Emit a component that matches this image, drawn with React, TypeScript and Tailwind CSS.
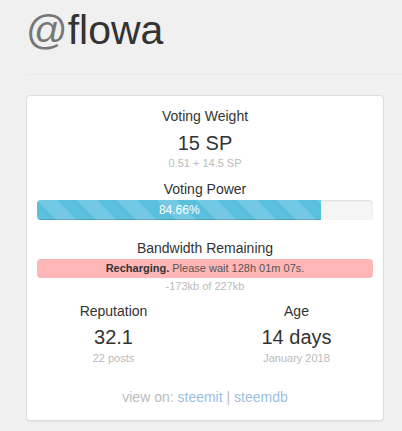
import React from 'react'

const stripes =
  'bg-[linear-gradient(45deg,rgba(255,255,255,.15)_25%,transparent_25%,transparent_50%,rgba(255,255,255,.15)_50%,rgba(255,255,255,.15)_75%,transparent_75%,transparent)] bg-[length:40px_40px]'

export default function App() {
  const power = 84.66
  return (
    <div className="min-h-[431px] bg-[#f0f0f0] pl-[26px] pt-[8px] font-['Liberation_Sans',Arial,sans-serif] text-[#333]">
      <h1 className="text-[41px] leading-[45px]">
        <span className="text-[#777]">@</span>flowa
      </h1>
      <hr className="mt-[21px] border-t border-[#e9e9e9]" />
      <div className="mt-[20px] w-[358px] rounded-[4px] border border-[#ddd] bg-white px-[10px] pt-[10px] pb-[13px] text-center shadow-[0_1px_1px_rgba(0,0,0,.05)]">
        <div className="text-[14px] leading-[20px]">Voting Weight</div>
        <div className="mt-[5px] text-[20px] leading-[24px]">15 SP</div>
        <div className="text-[11px] leading-[16px] text-[#bbb]">0.51 + 14.5 SP</div>

        <div className="mt-[8px] text-[14px] leading-[20px]">Voting Power</div>
        <div className="mt-[1px] h-[20px] overflow-hidden rounded-[4px] bg-[#f5f5f5] shadow-[inset_0_1px_2px_rgba(0,0,0,.1)]">
          <div
            className={`h-full bg-[#5bc0de] text-[12px] leading-[20px] text-white shadow-[inset_0_-1px_0_rgba(0,0,0,.15)] ${stripes}`}
            style={{ width: `${power}%` }}
          >
            {power}%
          </div>
        </div>

        <div className="mt-[18px] text-[14px] leading-[20px]">Bandwidth Remaining</div>
        <div className="mt-[1px] h-[19px] rounded-[4px] bg-[#ffb6b6] text-[11px] leading-[19px] text-[#555]">
          <b className="text-[#333]">Recharging.</b> Please wait 128h 01m 07s.
        </div>
        <div className="text-[11px] leading-[16px] text-[#bbb]">-173kb of 227kb</div>

        <div className="-mx-[15px] mt-[7px] grid grid-cols-2">
          <div>
            <div className="text-[14px] leading-[20px]">Reputation</div>
            <div className="mt-[4px] text-[20px] leading-[24px]">32.1</div>
            <div className="mt-[1px] text-[11px] leading-[16px] text-[#bbb]">22 posts</div>
          </div>
          <div>
            <div className="text-[14px] leading-[20px]">Age</div>
            <div className="mt-[4px] text-[20px] leading-[24px]">14 days</div>
            <div className="mt-[1px] text-[11px] leading-[16px] text-[#bbb]">January 2018</div>
          </div>
        </div>

        <div className="mt-[21px] text-[14px] leading-[20px] text-[#bbb]">
          view on: <a className="text-[#9cc0e0]">steemit</a> | <a className="text-[#9cc0e0]">steemdb</a>
        </div>
      </div>
    </div>
  )
}
